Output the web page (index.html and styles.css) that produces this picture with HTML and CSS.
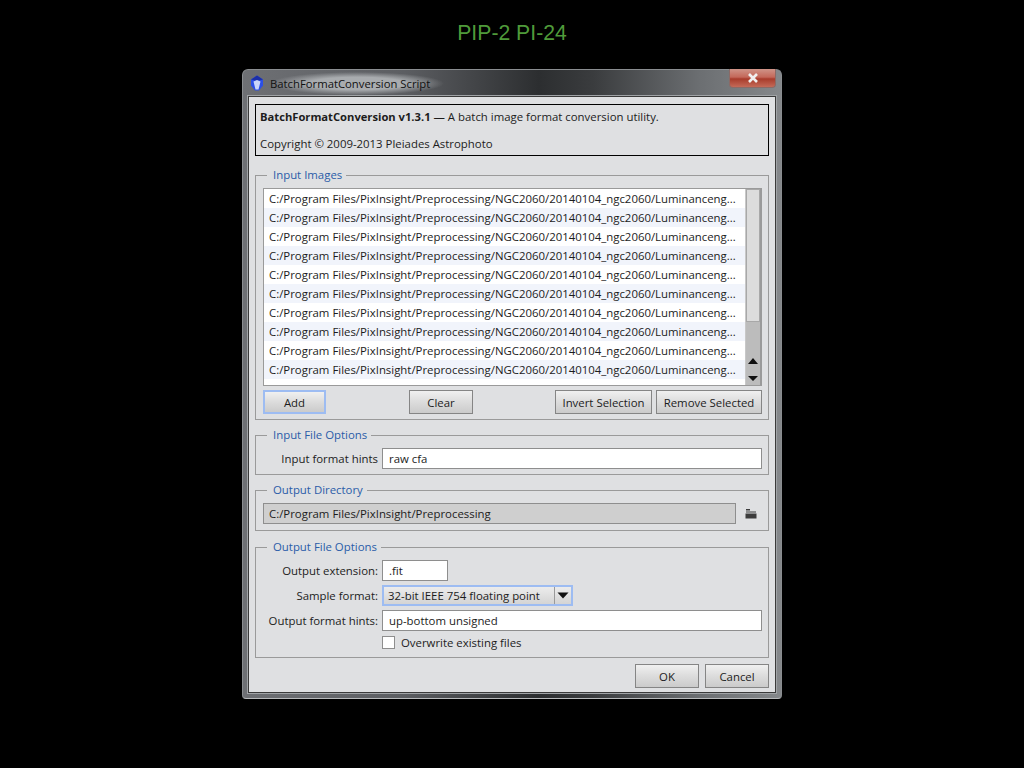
FILE: index.html
```html
<!DOCTYPE html>
<html lang="en">
<head>
  <meta charset="UTF-8">
  <title>PIP-2 PI-24</title>
  <link rel="stylesheet" href="styles.css">
</head>
<body>
  <h1 class="slide-title">PIP-2 PI-24</h1>
  <div class="window">
    <div class="titlebar">
      <svg class="app-icon" width="16" height="16" viewBox="0 0 16 16">
        <path d="M8 0.5 14 4.5V10.5L10 15.5H6L2 10.5V4.5Z" fill="#2b4fe6"/>
        <path d="M8 0.5 14 4.5 8 6 2 4.5Z" fill="#1c2fa8"/>
        <path d="M4.5 6.5 8 5 11.5 6.5 9.5 14.5H6.5Z" fill="#c9d6fa"/>
      </svg>
      <span class="title-text">BatchFormatConversion Script</span>
      <div class="close-btn">
        <svg width="14" height="10" viewBox="0 0 14 10">
          <path d="M3 1 11 9M11 1 3 9" stroke="#f0f0f0" stroke-width="2.6" fill="none"/>
        </svg>
      </div>
    </div>
    <div class="content">
      <div class="info-box">
        <p><b>BatchFormatConversion v1.3.1</b> — A batch image format conversion utility.</p>
        <p>Copyright © 2009-2013 Pleiades Astrophoto</p>
      </div>

      <fieldset class="group group-images">
        <legend>Input Images</legend>
        <div class="list-wrap">
          <ul class="file-list">
            <li>C:/Program Files/PixInsight/Preprocessing/NGC2060/20140104_ngc2060/Luminanceng...</li>
            <li>C:/Program Files/PixInsight/Preprocessing/NGC2060/20140104_ngc2060/Luminanceng...</li>
            <li>C:/Program Files/PixInsight/Preprocessing/NGC2060/20140104_ngc2060/Luminanceng...</li>
            <li>C:/Program Files/PixInsight/Preprocessing/NGC2060/20140104_ngc2060/Luminanceng...</li>
            <li>C:/Program Files/PixInsight/Preprocessing/NGC2060/20140104_ngc2060/Luminanceng...</li>
            <li>C:/Program Files/PixInsight/Preprocessing/NGC2060/20140104_ngc2060/Luminanceng...</li>
            <li>C:/Program Files/PixInsight/Preprocessing/NGC2060/20140104_ngc2060/Luminanceng...</li>
            <li>C:/Program Files/PixInsight/Preprocessing/NGC2060/20140104_ngc2060/Luminanceng...</li>
            <li>C:/Program Files/PixInsight/Preprocessing/NGC2060/20140104_ngc2060/Luminanceng...</li>
            <li>C:/Program Files/PixInsight/Preprocessing/NGC2060/20140104_ngc2060/Luminanceng...</li>
            <li>C:/Program Files/PixInsight/Preprocessing/NGC2060/20140104_ngc2060/Luminanceng...</li>
          </ul>
          <div class="scrollbar">
            <div class="scroll-handle"></div>
            <div class="scroll-track"></div>
            <svg class="scroll-arrows" width="14" height="32" viewBox="0 0 14 32">
              <path d="M7 6 12 12H2Z M2 24H12L7 29Z" fill="#111"/>
            </svg>
          </div>
        </div>
        <div class="button-row">
          <button class="btn btn-add is-focus">Add</button>
          <button class="btn btn-clear">Clear</button>
          <button class="btn btn-invert">Invert Selection</button>
          <button class="btn btn-remove">Remove Selected</button>
        </div>
      </fieldset>

      <fieldset class="group group-input">
        <legend>Input File Options</legend>
        <div class="form-row">
          <label>Input format hints</label>
          <div class="text-field">raw cfa</div>
        </div>
      </fieldset>

      <fieldset class="group group-dir">
        <legend>Output Directory</legend>
        <div class="dir-row">
          <div class="dir-field">C:/Program Files/PixInsight/Preprocessing</div>
          <svg class="folder-icon" width="12" height="10" viewBox="0 0 12 10">
            <path d="M1 0H5V1.5H1Z M1 2.5H11V3.5H1Z M0.5 4.5H11.5V9.5H0.5Z" fill="#3c3c3c"/>
          </svg>
        </div>
      </fieldset>

      <fieldset class="group group-output">
        <legend>Output File Options</legend>
        <div class="form-grid">
          <div class="form-row">
            <label>Output extension:</label>
            <div class="text-field ext-field">.fit</div>
          </div>
          <div class="form-row">
            <label>Sample format:</label>
            <div class="select-box">
              <span class="select-value">32-bit IEEE 754 floating point</span>
              <span class="select-arrow">
                <svg width="12" height="7" viewBox="0 0 12 7"><path d="M0.5 0.5H11.5L6 6.5Z" fill="#111"/></svg>
              </span>
            </div>
          </div>
          <div class="form-row">
            <label>Output format hints:</label>
            <div class="text-field">up-bottom unsigned</div>
          </div>
        </div>
        <div class="check-row">
          <span class="check-box"></span>
          <span>Overwrite existing files</span>
        </div>
      </fieldset>

      <div class="dialog-buttons">
        <button class="btn btn-dialog">OK</button>
        <button class="btn btn-dialog">Cancel</button>
      </div>
    </div>
  </div>
</body>
</html>
```

FILE: styles.css
```css
* { margin:0; padding:0; box-sizing:border-box; }
body { background:#000; font-family:"Open Sans",sans-serif; font-size:11.4px; color:#1c1c1c; }

.slide-title { font-family:"Liberation Sans",sans-serif; font-size:21.2px; font-weight:normal; line-height:26px;
               color:#4f9a3a; text-align:center; padding-top:20px; }

.window { width:540px; height:630px; margin:23px auto 0; padding:0 5px 5px; border-radius:6px 6px 4px 4px;
          background:linear-gradient(90deg,#6e7074 0,#5c5e62 30%,#2c2e30 55%,#3a3c3e 65%,#6c6f72 85%,#85888b 100%);
          border:1px solid #8a8d90; border-bottom-color:#b8babc; display:flex; flex-direction:column; }
.titlebar { height:26px; flex:none; display:flex; align-items:center; position:relative; margin-left:1px; }
.app-icon { margin-right:5px; }
.title-text { font-size:11.3px; color:#111; padding:4px 14px 4px 0; margin-top:1px;
              background:radial-gradient(closest-side,#a9acaf 55%,rgba(169,172,175,0) 100%); }
.close-btn { position:absolute; right:0; top:-1px; width:47px; height:19px; border:1px solid #8a6a66; border-top:0;
             border-radius:0 0 4px 4px; display:flex; align-items:center; justify-content:center;
             background:linear-gradient(#cf9488 0,#c4685a 45%,#a83c2c 55%,#c46a58 100%); }

.content { flex:1; background:#dfe0e2; border:1px solid #3a3a3a; outline:1px solid #a0a3a6; padding:7px 6px 0; }

.info-box { height:52px; border:1px solid #000; padding:4px; line-height:16px; }
.info-box p + p { margin-top:11px; }
.info-box b { font-size:11.2px; }

.group { border:1px solid #9a9a9a; padding:5px 6px 5px 7px; margin-top:7px; min-width:0; }
.group legend { margin-left:4px; padding:0 4px 0 6px; line-height:16px; font-size:11.4px; color:#2a5ca8; }
.group-images { margin-top:11px; }
.group-dir { padding-bottom:6px; }
.group-output { margin-top:8px; padding-bottom:8px; }

.list-wrap { display:flex; height:198px; background:#fff; border:1px solid #9a9a9a; border-right:2px solid #9a9a9a; overflow:hidden; }
.file-list { flex:1; list-style:none; overflow:hidden; min-width:0; }
.file-list li { height:19px; line-height:19px; padding-left:5px; white-space:nowrap; }
.file-list li:nth-child(even) { background:#f1f4fb; }
.scrollbar { width:15px; flex:none; display:flex; flex-direction:column; background:#bcbcbc; border-left:1px solid #c8c8c8; }
.scroll-handle { height:133px; background:#dcdcdc; border:1px solid #a8a8a8; }
.scroll-track { flex:1; }
.scroll-arrows { flex:none; display:block; margin-bottom:1px; }

.btn { font-family:inherit; font-size:11.4px; color:#1c1c1c; height:24px; border:1px solid #858585;
       background:linear-gradient(#f0f0f0 0,#dcdcdc 50%,#cbcbcb 100%); }
.button-row { display:flex; margin-top:4px; }
.btn-add { width:63px; }
.btn-clear { width:64px; margin-left:83px; }
.btn-invert { width:97px; margin-left:82px; }
.btn-remove { width:106px; margin-left:4px; }
.is-focus { border:2px solid #9dbcf2; }

.form-row { display:grid; grid-template-columns:115px 1fr; column-gap:4px; align-items:center; }
.form-row label { text-align:right; white-space:nowrap; }
.form-grid { display:flex; flex-direction:column; gap:4px; }
.text-field { height:21px; line-height:19px; padding-left:6px; background:#fff; border:1px solid #8e8e8e; }
.ext-field { width:66px; }

.dir-row { display:flex; align-items:center; }
.dir-field { width:473px; height:21px; line-height:19px; padding-left:5px; background:#cfcfcf; border:1px solid #8e8e8e; }
.folder-icon { margin-left:9px; }

.select-box { width:191px; height:21px; display:flex; border:2px solid #9dbcf2; background:linear-gradient(#ececec,#d4d4d4); }
.select-value { flex:1; line-height:17px; padding-left:4px; white-space:nowrap; }
.select-arrow { width:17px; display:flex; align-items:center; justify-content:center; border-left:1px solid #9a9a9a; }

.check-row { display:flex; align-items:center; gap:6px; margin:5px 0 0 119px; height:13px; }
.check-box { width:13px; height:13px; background:#fff; border:1px solid #8e8e8e; }

.dialog-buttons { display:flex; justify-content:flex-end; gap:6px; margin-top:6px; }
.btn-dialog { width:64px; }
```
